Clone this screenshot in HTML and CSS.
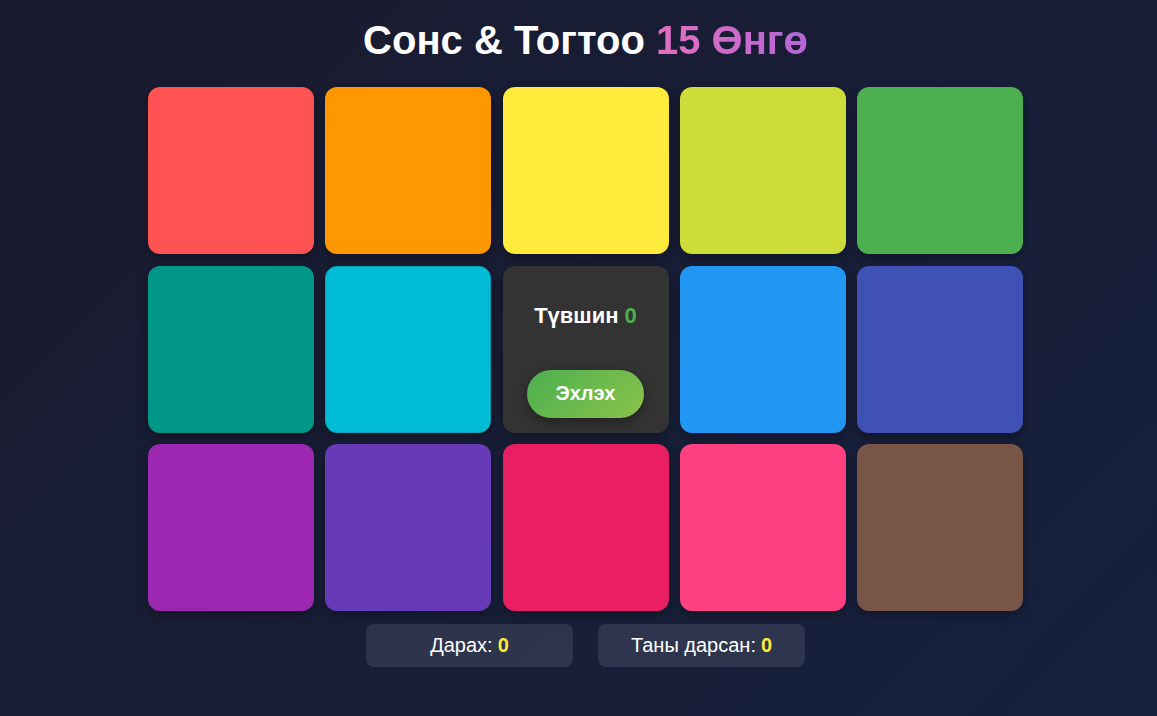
FILE: index.html
```html
<!DOCTYPE html>
<html lang="mn">
<head>
<meta charset="utf-8">
<title>Сонс &amp; Тогтоо</title>
<link rel="stylesheet" href="styles.css">
</head>
<body>
<main class="app">
  <h1 class="title">Сонс &amp; Тогтоо <span class="accent">15 Өнгө</span></h1>
  <div class="board">
    <div class="tile c-red"></div>
    <div class="tile c-orange"></div>
    <div class="tile c-yellow"></div>
    <div class="tile c-lime"></div>
    <div class="tile c-green"></div>
    <div class="tile c-teal"></div>
    <div class="tile c-cyan"></div>
    <div class="center">
      <div class="level">Түвшин <span class="level-num">0</span></div>
      <button class="start">Эхлэх</button>
    </div>
    <div class="tile c-blue"></div>
    <div class="tile c-indigo"></div>
    <div class="tile c-purple"></div>
    <div class="tile c-deeppurple"></div>
    <div class="tile c-pink"></div>
    <div class="tile c-rose"></div>
    <div class="tile c-brown"></div>
  </div>
  <div class="stats">
    <div class="stat">Дарах: <span class="val">0</span></div>
    <div class="stat">Таны дарсан: <span class="val">0</span></div>
  </div>
</main>
</body>
</html>
```
FILE: styles.css
```css
html, body {
  margin: 0;
  padding: 0;
  height: 100%;
}
body {
  background: linear-gradient(135deg, #1a1a2e 0%, #16213e 100%);
  font-family: "Liberation Sans", Arial, sans-serif;
  color: #fff;
  overflow: hidden;
}
.app {
  display: flex;
  flex-direction: column;
  align-items: center;
  padding-top: 18px;
  padding-left: 14px;
}
.title {
  margin: 0;
  font-size: 40px;
  font-weight: bold;
  line-height: 44px;
  height: 44px;
}
.accent {
  background: linear-gradient(90deg, #e36fbf, #b566d8);
  -webkit-background-clip: text;
  background-clip: text;
  color: transparent;
}
.board {
  margin-top: 25px;
  display: grid;
  grid-template-columns: repeat(5, 166px);
  grid-auto-rows: 167px;
  column-gap: 11.25px;
  row-gap: 11.5px;
}
.tile {
  border-radius: 12px;
  box-shadow: 0 4px 10px rgba(0, 0, 0, 0.3);
}
.c-red { background: #ff5252; }
.c-orange { background: #ff9800; }
.c-yellow { background: #ffeb3b; }
.c-lime { background: #cddc39; }
.c-green { background: #4caf50; }
.c-teal { background: #009688; }
.c-cyan { background: #00bcd4; border: 1px solid #0aa3b8; }
.c-blue { background: #2196f3; }
.c-indigo { background: #3f51b5; }
.c-purple { background: #9c27b0; }
.c-deeppurple { background: #673ab7; }
.c-pink { background: #e91e63; }
.c-rose { background: #ff4081; }
.c-brown { background: #795548; }
.center {
  background: #333333;
  border-radius: 12px;
  display: flex;
  flex-direction: column;
  align-items: center;
  padding-top: 37px;
  box-sizing: border-box;
  box-shadow: 0 4px 10px rgba(0, 0, 0, 0.3);
}
.level {
  font-size: 22px;
  font-weight: bold;
  line-height: 26px;
}
.level-num { color: #4caf50; }
.start {
  margin-top: 41px;
  width: 117px;
  height: 48px;
  border: none;
  border-radius: 24px;
  background: linear-gradient(135deg, #4caf50, #8bc34a);
  color: #fff;
  font-family: "Liberation Sans", Arial, sans-serif;
  font-size: 20px;
  font-weight: bold;
  box-shadow: 0 4px 12px rgba(0, 0, 0, 0.35);
  cursor: pointer;
}
.stats {
  margin-top: 13px;
  display: flex;
  gap: 25px;
}
.stat {
  width: 207px;
  height: 43px;
  box-sizing: border-box;
  background: rgba(255, 255, 255, 0.1);
  border-radius: 8px;
  display: flex;
  align-items: center;
  justify-content: center;
  font-size: 20px;
}
.val {
  color: #ffeb3b;
  font-weight: bold;
  margin-left: 5px;
}
```
